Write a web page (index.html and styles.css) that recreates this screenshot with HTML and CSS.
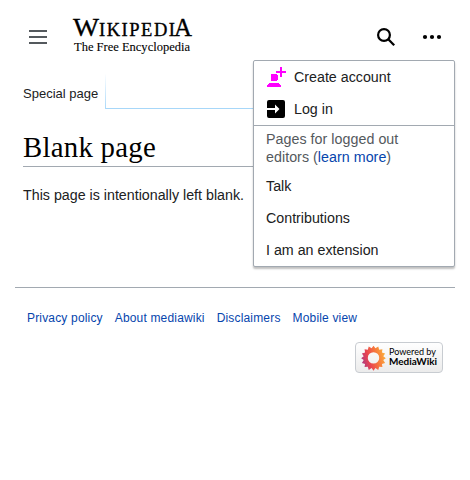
FILE: index.html
```html
<!DOCTYPE html>
<html lang="en">
<head>
<meta charset="utf-8">
<title>Blank page</title>
<link rel="stylesheet" href="styles.css">
</head>
<body>
<header class="header">
  <svg class="menu-icon" width="18" height="14" viewBox="0 0 18 14"><path fill="#54595d" d="M0 0h18v2H0zM0 6h18v2H0zM0 12h18v2H0z"/></svg>
  <svg class="logo" width="120" height="40" viewBox="0 0 120 40">
    <g class="wordmark">
      <text x="0" y="19" class="cap" textLength="26" lengthAdjust="spacingAndGlyphs">W</text>
      <text x="26" y="19" class="small" textLength="76" lengthAdjust="spacing">IKIPEDI</text>
      <text x="101" y="19" class="cap" textLength="18" lengthAdjust="spacingAndGlyphs">A</text>
    </g>
    <text x="1" y="34" class="tagline" textLength="116" lengthAdjust="spacingAndGlyphs">The Free Encyclopedia</text>
  </svg>
  <div class="tools">
    <svg width="20" height="20" viewBox="0 0 20 20"><g fill="none" stroke="#000"><circle cx="8" cy="8" r="5.900" stroke-width="2.200"/><path stroke-width="2.300" d="M12 12l6.200 6.200"/></g></svg>
    <svg width="20" height="20" viewBox="0 0 20 20"><circle cx="10" cy="10" r="2.100"/><circle cx="3" cy="10" r="2.100"/><circle cx="17" cy="10" r="2.100"/></svg>
  </div>
  <div class="menu">
    <ul>
      <li><svg width="20" height="20" viewBox="0 0 20 20"><path fill="#f0f" shape-rendering="crispEdges" d="M14 0h2v4h4v2h-4v4h-2V6h-4V4h4zM5 7h6v1h1v5h-1v1H5zM3 16h10v1h1v1h1v2H1v-2h1v-1h1z"/></svg>Create account</li>
      <li><svg width="20" height="20" viewBox="0 0 20 20"><path fill-rule="evenodd" d="M3 1h14a2 2 0 0 1 2 2v14a2 2 0 0 1-2 2H3a2 2 0 0 1-2-2v-6h8v3.500l4.500-4.500L9 5.500V9H1V3a2 2 0 0 1 2-2z"/></svg>Log in</li>
    </ul>
    <p>Pages for logged out editors (<a>learn more</a>)</p>
    <ul>
      <li>Talk</li>
      <li>Contributions</li>
      <li>I am an extension</li>
    </ul>
  </div>
</header>
<main>
  <nav class="tabs"><span class="tab">Special page</span></nav>
  <h1>Blank page</h1>
  <p class="content">This page is intentionally left blank.</p>
</main>
<footer>
  <div class="links"><a>Privacy policy</a><a>About mediawiki</a><a>Disclaimers</a><a>Mobile view</a></div>
  <svg class="badge" width="88" height="31" viewBox="0 0 88 31">
    <defs>
      <linearGradient id="bg" x2="0" y2="1"><stop stop-color="#fff"/><stop offset="1" stop-color="#ebebeb"/></linearGradient>
      <linearGradient id="sun" x1="0" y1=".65" x2="1" y2=".35"><stop stop-color="#a93a85"/><stop offset=".3" stop-color="#e84350"/><stop offset=".65" stop-color="#f77a3c"/><stop offset="1" stop-color="#fbb33c"/></linearGradient>
    </defs>
    <rect x=".5" y=".5" width="87" height="30" rx="3.5" fill="url(#bg)" stroke="#c8ccd1"/>
    <path transform="translate(1.400 .8) scale(.95)" fill="url(#sun)" fill-rule="evenodd" d="M18 3l2 2.800 3-1.900 1 3.400 3.400-.5-.5 3.400 3.300 1-1.900 3 2.700 2-2.700 2 1.900 3-3.300 1 .5 3.400-3.400-.5-1 3.400-3-1.900-2 2.700-2-2.700-3 1.900-1-3.400-3.400.5.5-3.400-3.300-1 1.900-3-2.700-2 2.700-2-1.900-3 3.300-1-.5-3.400 3.400.5 1-3.400 3 1.900zM18 9.900a6 6 0 1 0 0 12 6 6 0 0 0 0-12z"/>
    <text x="34" y="13" class="powered" textLength="47" lengthAdjust="spacingAndGlyphs">Powered by</text>
    <text x="34" y="23" class="powered bold" textLength="48" lengthAdjust="spacingAndGlyphs">MediaWiki</text>
  </svg>
</footer>
</body>
</html>
```
FILE: styles.css
```css
* { box-sizing: border-box; }
body { margin: 0; padding: 0 15px; background: #fff; color: #202122; font: 14.25px/18px "Liberation Sans", sans-serif; }
a { color: #0645ad; }
ul { list-style: none; margin: 0; padding: 0; }
.header { position: relative; display: flex; align-items: center; height: 74px; padding: 0 13px 0 14px; }
.menu-icon { margin-right: 26px; }
.logo { overflow: visible; font-family: "Liberation Serif", serif; fill: #000; }
.cap { font-size: 26px; }
.small { font-size: 18.500px; }
.wordmark { stroke: #000; stroke-width: .35px; }
.tagline { font-size: 13px; stroke: #000; stroke-width: .1px; }
.tools { display: flex; gap: 26px; margin-left: auto; }
.menu { position: absolute; z-index: 2; top: 60px; right: 0; width: 202px; height: 207px; border: 1px solid #a2a9b1; border-radius: 2px; background: #fff; box-shadow: 0 2px 2px rgba(0,0,0,.25); }
.menu li { display: flex; align-items: center; gap: 8px; height: 32px; padding: 0 12px; }
.menu p { margin: 0; padding: 4px 40px 4px 12px; border-top: 1px solid #a2a9b1; color: #54595d; letter-spacing: .04px; }
main { height: 213px; padding: 0 8px; }
.tabs { display: flex; height: 35px; margin-right: -8px; font-size: 13px; }
.tabs::after { content: ""; flex: 1; border-bottom: 1px solid #a7d7f9; }
.tab { width: 83px; padding-top: 11px; border-right: 1px solid; border-image: linear-gradient(#fff, #a7d7f9) 1; border-width: 0 1px 0 0; }
h1 { height: 37px; margin: 21px 0 19px; border-bottom: 1px solid #a2a9b1; color: #000; font: 28.800px/34px "Liberation Serif", serif; letter-spacing: .27px; }
.content { margin: 0; }
footer { display: flex; flex-direction: column; border-top: 1px solid #a2a9b1; padding: 21px 12px; }
.links { display: flex; gap: 12px; font-size: 12px; letter-spacing: .17px; }
.badge { align-self: flex-end; margin-top: 15px; }
.powered { font: 9px Lato, sans-serif; }
.bold { font-size: 9.600px; font-weight: 700; }
```
